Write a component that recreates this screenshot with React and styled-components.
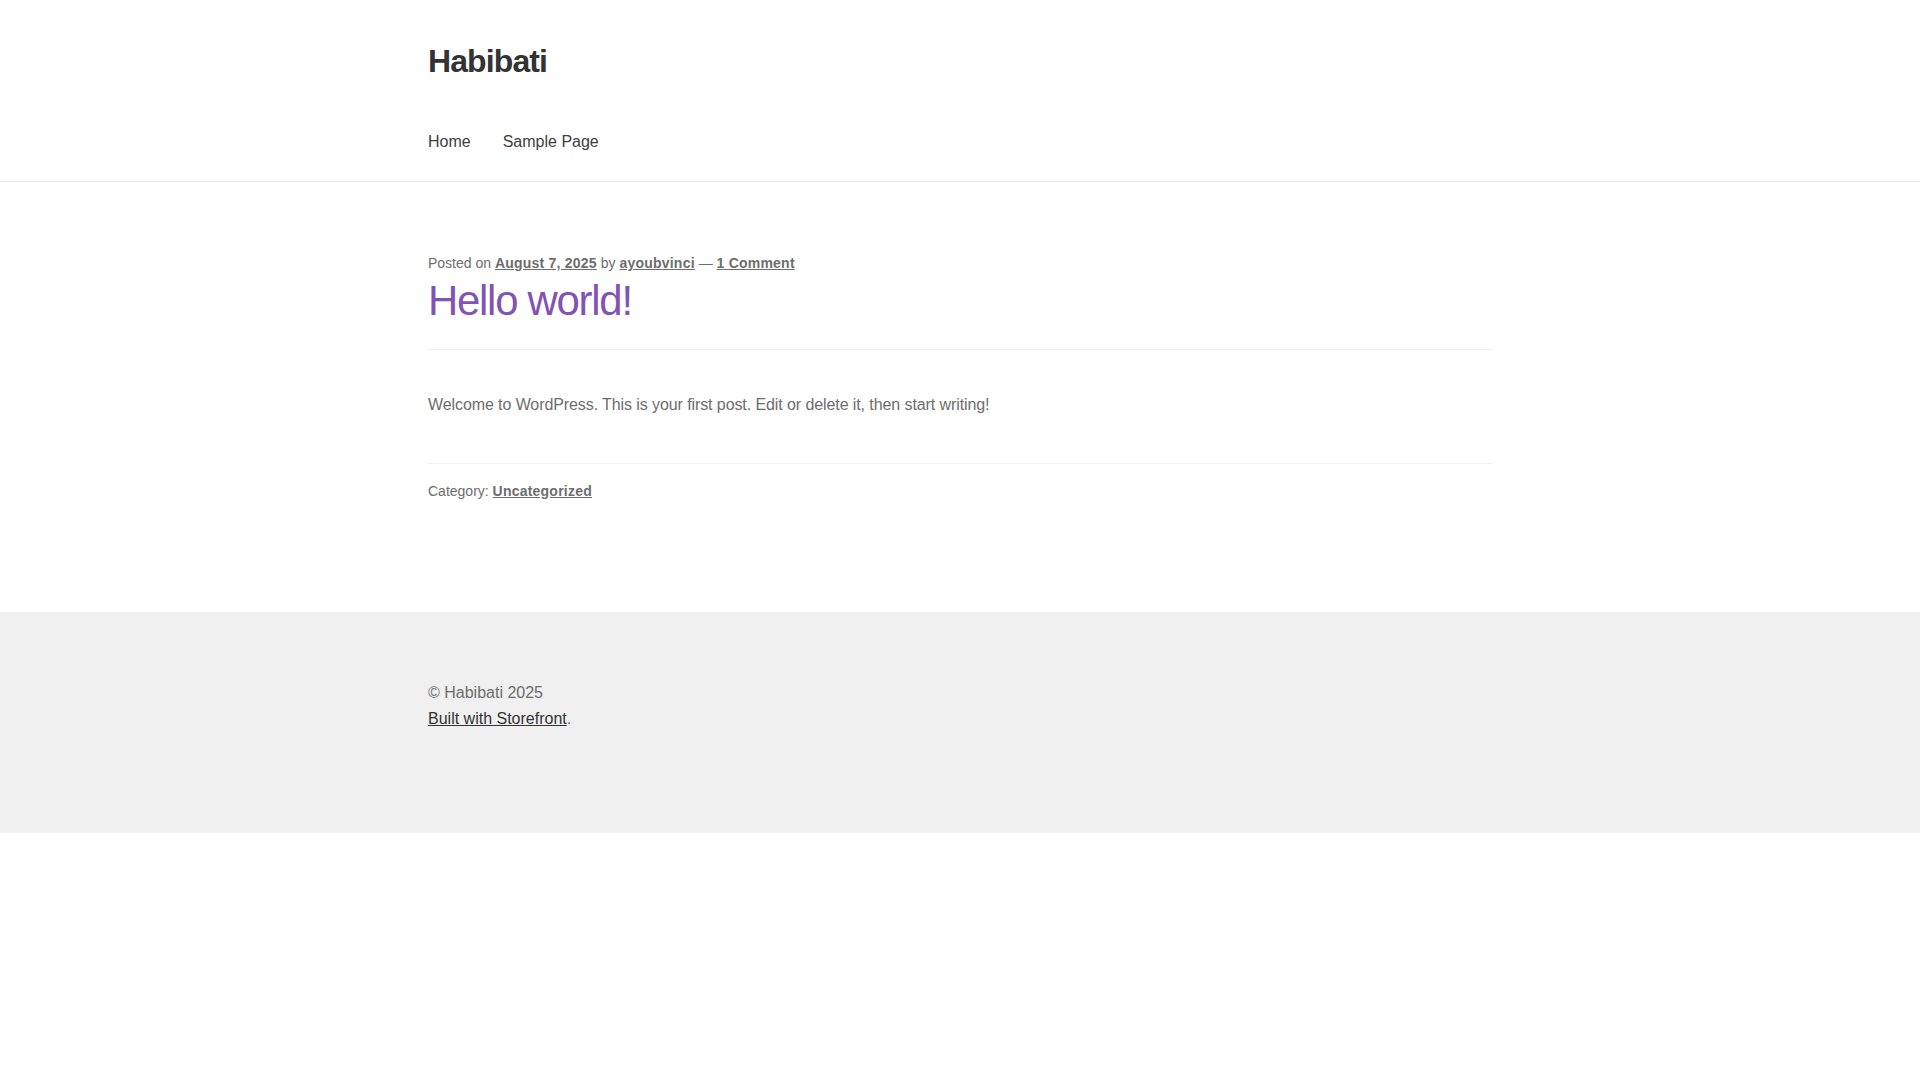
import React from 'react';
import styled, { createGlobalStyle } from 'styled-components';

const GlobalStyle = createGlobalStyle`
  html, body {
    margin: 0;
    padding: 0;
    background: #fff;
  }
  body {
    font-family: "Liberation Sans", Arial, sans-serif;
    color: #6d6d6d;
    -webkit-font-smoothing: antialiased;
  }
`;

const Wrap = styled.div`
  width: 1064px;
  margin: 0 auto;
`;

const Header = styled.header`
  padding: 41px 0 27px;
  border-bottom: 1px solid #ececec;
`;

const SiteTitle = styled.h1`
  margin: 0;
  font-size: 32px;
  line-height: 40px;
  font-weight: 700;
  letter-spacing: -0.9px;
  color: #333;
`;

const Nav = styled.nav`
  display: flex;
  gap: 32px;
  margin-top: 49px;
`;

const NavLink = styled.a`
  font-size: 16px;
  line-height: 24px;
  color: #404040;
  text-decoration: none;
`;

const Main = styled.main`
  padding: 71px 0 111px;
`;

const Meta = styled.div`
  font-size: 14px;
  line-height: 20px;
  color: #6d6d6d;
`;

const MetaLink = styled.a`
  color: #6d6d6d;
  font-weight: 700;
  letter-spacing: 0.22px;
  text-decoration: underline;
`;

const EntryHeader = styled.div`
  padding-bottom: 23px;
  border-bottom: 1px solid #f0f0f0;
`;

const EntryTitle = styled.h2`
  margin: 3px 0 0;
  font-size: 41.89px;
  line-height: 50px;
  font-weight: 400;
  letter-spacing: -1.25px;
  color: #7f54b3;
`;

const Content = styled.div`
  padding: 41.5px 0 45px;
  border-bottom: 1px solid #f0f0f0;
`;

const Paragraph = styled.p`
  margin: 0;
  font-size: 16px;
  line-height: 26px;
  letter-spacing: -0.09px;
  color: #6d6d6d;
`;

const EntryFooter = styled(Meta)`
  padding-top: 17px;
`;

const Footer = styled.footer`
  background: #f0f0f0;
  padding: 68.5px 0 100.5px;
`;

const FooterLine = styled.div`
  font-size: 16px;
  line-height: 26px;
  color: #6d6d6d;
`;

const FooterLink = styled.a`
  color: #333;
  text-decoration: underline;
`;

export default function App() {
  return (
    <>
      <GlobalStyle />
      <Header>
        <Wrap>
          <SiteTitle>Habibati</SiteTitle>
          <Nav>
            <NavLink href="#">Home</NavLink>
            <NavLink href="#">Sample Page</NavLink>
          </Nav>
        </Wrap>
      </Header>
      <Main>
        <Wrap>
          <EntryHeader>
            <Meta>
              Posted on <MetaLink href="#">August 7, 2025</MetaLink> by{' '}
              <MetaLink href="#">ayoubvinci</MetaLink> — <MetaLink href="#">1 Comment</MetaLink>
            </Meta>
            <EntryTitle>Hello world!</EntryTitle>
          </EntryHeader>
          <Content>
            <Paragraph>
              Welcome to WordPress. This is your first post. Edit or delete it, then start writing!
            </Paragraph>
          </Content>
          <EntryFooter>
            Category: <MetaLink href="#">Uncategorized</MetaLink>
          </EntryFooter>
        </Wrap>
      </Main>
      <Footer>
        <Wrap>
          <FooterLine>© Habibati 2025</FooterLine>
          <FooterLine>
            <FooterLink href="#">Built with Storefront</FooterLink>.
          </FooterLine>
        </Wrap>
      </Footer>
    </>
  );
}
